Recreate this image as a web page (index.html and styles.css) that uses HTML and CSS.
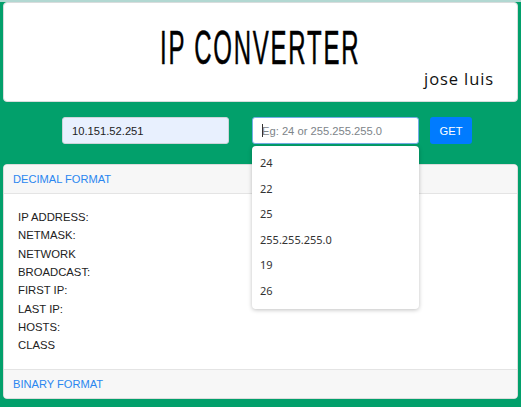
FILE: index.html
```html
<!DOCTYPE html>
<html>
<head>
<meta charset="utf-8">
<title>IP Converter</title>
<link rel="stylesheet" href="styles.css">
</head>
<body>
<div class="page">
  <header class="hero">
    <h1 class="title"><span class="title-text">IP CONVERTER</span></h1>
    <div class="author">jose luis</div>
  </header>

  <form class="form-row">
    <input class="field field-ip" type="text" value="10.151.52.251">
    <div class="mask-wrap">
      <input class="field field-mask" type="text" placeholder="Eg: 24 or 255.255.255.0">
      <span class="caret"></span>
      <ul class="suggest">
        <li>24</li>
        <li>22</li>
        <li>25</li>
        <li>255.255.255.0</li>
        <li>19</li>
        <li>26</li>
      </ul>
    </div>
    <button class="btn" type="button">GET</button>
  </form>

  <section class="card">
    <div class="card-header">DECIMAL FORMAT</div>
    <div class="card-body">
      <div class="row">IP ADDRESS:</div>
      <div class="row">NETMASK:</div>
      <div class="row">NETWORK</div>
      <div class="row">BROADCAST:</div>
      <div class="row">FIRST IP:</div>
      <div class="row">LAST IP:</div>
      <div class="row">HOSTS:</div>
      <div class="row">CLASS</div>
    </div>
    <div class="card-header card-footer">BINARY FORMAT</div>
  </section>
</div>
</body>
</html>
```

FILE: styles.css
```css
* { box-sizing: border-box; }

html, body {
  margin: 0;
  padding: 0;
}

body {
  background: #02a06b;
  border-top: 2px solid #b2d8d2;
  font-family: "Liberation Sans", Arial, sans-serif;
  color: #212529;
  height: 407px;
  overflow: hidden;
}

.page {
  padding: 0 3px;
}

.hero {
  background: #fff;
  border: 1px solid #d8dcdc;
  border-radius: 4px;
  height: 100px;
  padding: 21px 23px 0 23px;
}

.title {
  margin: 0;
  text-align: center;
  font-family: "Liberation Sans", Arial, sans-serif;
  font-weight: normal;
  font-size: 48px;
  line-height: 48px;
  color: #000;
}

.title-text {
  display: inline-block;
  transform: scaleX(0.5);
  letter-spacing: 3.5px;
  -webkit-text-stroke: 0.5px #000;
}

.author {
  text-align: right;
  font-family: "Open Sans", sans-serif;
  font-size: 16.5px;
  line-height: 18px;
  letter-spacing: 0.9px;
  margin-top: -2px;
  color: #111;
}

.form-row {
  display: flex;
  align-items: flex-start;
  margin: 15px 0 20px 0;
  padding-left: 59px;
  height: 27px;
}

.field {
  width: 167px;
  height: 27px;
  border: 1px solid #ced4da;
  border-radius: 3px;
  padding: 0 9px;
  font-family: "Liberation Sans", Arial, sans-serif;
  font-size: 11.2px;
  color: #222;
  outline: none;
}

.field-ip {
  background: #e8f0fe;
}

.field-mask {
  background: #fff;
  border-color: #74ade6;
}

.field-mask::placeholder {
  color: #7d8489;
}

.mask-wrap {
  position: relative;
  margin-left: 23px;
  width: 167px;
}

.caret {
  position: absolute;
  left: 10px;
  top: 7px;
  width: 1px;
  height: 13px;
  background: #333;
}

.suggest {
  position: absolute;
  left: 0;
  top: 29px;
  width: 167px;
  margin: 0;
  padding: 4px 0 6px 0;
  list-style: none;
  background: #fff;
  border-radius: 4px;
  box-shadow: 0 1px 4px rgba(0, 0, 0, 0.25);
  z-index: 5;
}

.suggest li {
  height: 25.5px;
  line-height: 25.5px;
  padding-left: 8px;
  font-family: "Noto Sans", "Open Sans", sans-serif;
  font-size: 11px;
  color: #333;
}

.btn {
  margin-left: 11px;
  width: 42px;
  height: 27px;
  border: none;
  border-radius: 3px;
  background: #007bff;
  color: #fff;
  font-family: "Liberation Sans", Arial, sans-serif;
  font-size: 11.2px;
  padding: 0;
}

.card {
  background: #fff;
  border: 1px solid #dcdcdc;
  border-radius: 4px;
  overflow: hidden;
}

.card-header {
  background: #f7f7f7;
  border-bottom: 1px solid #e4e4e4;
  height: 29px;
  line-height: 28px;
  padding-left: 9px;
  font-size: 11.1px;
  color: #2a86f0;
}

.card-footer {
  border-bottom: none;
  border-top: 1px solid #e4e4e4;
}

.card-body {
  padding: 14px 14px 14px 14px;
}

.row {
  height: 18.33px;
  line-height: 18.33px;
  font-size: 11.3px;
  color: #222;
}
```
